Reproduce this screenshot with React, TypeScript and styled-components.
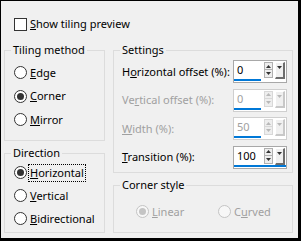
import React from "react";
import styled, { createGlobalStyle, css } from "styled-components";

const Global = createGlobalStyle`
  html, body { margin: 0; padding: 0; background: #000; }
  body {
    font-family: "Noto Sans", "Open Sans", sans-serif;
    font-size: 11px;
    color: #000;
  }
  * { box-sizing: border-box; }
`;

const Dialog = styled.div`
  width: 301px;
  height: 241px;
  border-style: solid;
  border-color: #000;
  border-width: 1px 3px 3px 1px;
  background: #f0f0f0;
  display: flex;
  flex-direction: column;
  padding: 15px 0 0 3px;
`;

const TopRow = styled.label`
  display: flex;
  align-items: center;
  gap: 3px;
  height: 16px;
  padding-left: 10px;
  line-height: 16px;
`;

const CheckBox = styled.span`
  width: 13px;
  height: 13px;
  border: 1px solid #333;
  background: #fff;
`;

const Columns = styled.div`
  display: flex;
  gap: 8px;
  margin-top: 10px;
`;

const Column = styled.div<{ $w: number }>`
  width: ${(p) => p.$w}px;
  display: flex;
  flex-direction: column;
  gap: 4px;
`;

const Group = styled.fieldset<{ $h: number }>`
  margin: 0;
  padding: 0;
  border: 1px solid #dcdcdc;
  height: ${(p) => p.$h}px;
  min-width: 0;
`;

const Legend = styled.legend`
  margin-left: 6px;
  padding: 0 2px;
  line-height: 16px;
  height: 16px;
`;

const RadioList = styled.div<{ $pt: number; $row: number }>`
  display: flex;
  flex-direction: column;
  padding: ${(p) => p.$pt}px 0 0 9px;
  & > * { height: ${(p) => p.$row}px; }
`;

const RadioRow = styled.div<{ $disabled?: boolean; $w?: number }>`
  display: flex;
  align-items: center;
  gap: 3px;
  line-height: 16px;
  color: ${(p) => (p.$disabled ? "#a0a0a0" : "#000")};
  ${(p) => p.$w && css`width: ${p.$w}px;`}
`;

const Circle = styled.span<{ $checked?: boolean; $disabled?: boolean }>`
  width: 13px;
  height: 13px;
  flex: none;
  border-radius: 50%;
  border: 1px solid ${(p) => (p.$disabled ? "#c4c4c4" : "#333")};
  background: ${(p) => (p.$disabled ? "#f7f7f7" : "#fff")};
  display: flex;
  align-items: center;
  justify-content: center;
  &::after {
    content: "";
    width: 7px;
    height: 7px;
    border-radius: 50%;
    background: ${(p) => (p.$disabled ? "#c4c4c4" : "#333")};
    display: ${(p) => (p.$checked ? "block" : "none")};
  }
`;

const Focus = styled.span`
  outline: 1px dotted #000;
  outline-offset: 0;
  padding: 0 1px;
  margin-left: -1px;
`;

const U = styled.span`
  text-decoration: underline;
  text-underline-offset: 1px;
`;

const Settings = styled.div`
  display: flex;
  flex-direction: column;
  gap: 5.5px;
  padding: 2px 5px 0 8px;
`;

const SetRow = styled.div<{ $disabled?: boolean }>`
  display: flex;
  align-items: center;
  height: 23px;
  color: ${(p) => (p.$disabled ? "#a0a0a0" : "#000")};
`;

const SetLabel = styled.span`
  flex: 1;
  line-height: 16px;
`;

const SpinBox = styled.div<{ $disabled?: boolean }>`
  width: 54px;
  height: 23px;
  border: 1px solid ${(p) => (p.$disabled ? "#cfcfcf" : "#a8a8a8")};
  background: #fff;
  display: flex;
  align-items: flex-start;
`;

const SpinInner = styled.div<{ $wide?: boolean }>`
  display: flex;
  align-items: flex-start;
  width: 52px;
  height: 20px;
  ${(p) => p.$wide && css`border-bottom: 2px solid #0078d7;`}
`;

const SpinText = styled.div<{ $wide?: boolean; $disabled?: boolean }>`
  width: 27px;
  height: ${(p) => (p.$wide ? 18 : 20)}px;
  padding-left: 3px;
  line-height: 18px;
  color: ${(p) => (p.$disabled ? "#a0a0a0" : "#000")};
  ${(p) => !p.$wide && css`border-bottom: 2px solid #0078d7;`}
`;

const SpinButtons = styled.div`
  margin: 1px 0 0 3px;
  width: 9px;
  display: flex;
  flex-direction: column;
`;

const SpinBtn = styled.div<{ $disabled?: boolean }>`
  height: 8px;
  border: 1px solid ${(p) => (p.$disabled ? "#d8d8d8" : "#b0b0b0")};
  background: #eeeeee;
  display: flex;
  align-items: center;
  justify-content: center;
  & + & { border-top: none; }
`;

const DropBtn = styled.div<{ $disabled?: boolean }>`
  margin: 1px 0 0 2px;
  width: 10px;
  height: 17px;
  background: #f0f0f0;
  border-style: solid;
  border-width: 1px 2px 2px 1px;
  border-color: ${(p) =>
    p.$disabled ? "#fff #c8c8c8 #c8c8c8 #fff" : "#fff #6d6d6d #6d6d6d #fff"};
  display: flex;
  justify-content: center;
  padding-top: 3px;
`;

const Arrow = ({ up, color }: { up?: boolean; color: string }) => (
  <svg width="5" height="3" viewBox="0 0 5 3" style={{ display: "block" }}>
    <polygon points={up ? "0,3 5,3 2.5,0" : "0,0 5,0 2.5,3"} fill={color} />
  </svg>
);

const Spin = ({
  value,
  disabled,
  wide,
}: {
  value: string;
  disabled?: boolean;
  wide?: boolean;
}) => {
  const c = disabled ? "#b8b8b8" : "#333";
  return (
    <SpinBox $disabled={disabled}>
      <SpinInner $wide={wide}>
        <SpinText $wide={wide} $disabled={disabled}>
          {value}
        </SpinText>
        <SpinButtons>
          <SpinBtn $disabled={disabled}>
            <Arrow up color={c} />
          </SpinBtn>
          <SpinBtn $disabled={disabled}>
            <Arrow color={c} />
          </SpinBtn>
        </SpinButtons>
        <DropBtn $disabled={disabled}>
          <Arrow color={c} />
        </DropBtn>
      </SpinInner>
    </SpinBox>
  );
};

const CornerRow = styled.div`
  display: flex;
  padding: 7px 0 0 22px;
  height: 30px;
  & > * { height: 23px; }
`;

export default function App() {
  return (
    <>
      <Global />
      <Dialog>
        <TopRow>
          <CheckBox />
          <span>
            <U>S</U>how tiling preview
          </span>
        </TopRow>
        <Columns>
          <Column $w={101}>
            <Group $h={99}>
              <Legend>Tiling method</Legend>
              <RadioList $pt={3} $row={23.5}>
                <RadioRow>
                  <Circle />
                  <span>
                    <U>E</U>dge
                  </span>
                </RadioRow>
                <RadioRow>
                  <Circle $checked />
                  <span>
                    <U>C</U>orner
                  </span>
                </RadioRow>
                <RadioRow>
                  <Circle />
                  <span>
                    <U>M</U>irror
                  </span>
                </RadioRow>
              </RadioList>
            </Group>
            <Group $h={88}>
              <Legend>Direction</Legend>
              <RadioList $pt={0} $row={23}>
                <RadioRow>
                  <Circle $checked />
                  <Focus>
                    <U>H</U>orizontal
                  </Focus>
                </RadioRow>
                <RadioRow>
                  <Circle />
                  <span>
                    <U>V</U>ertical
                  </span>
                </RadioRow>
                <RadioRow>
                  <Circle />
                  <span>
                    <U>B</U>idirectional
                  </span>
                </RadioRow>
              </RadioList>
            </Group>
          </Column>
          <Column $w={180}>
            <Group $h={131}>
              <Legend>Settings</Legend>
              <Settings>
                <SetRow>
                  <SetLabel>
                    H<U>o</U>rizontal offset (%):
                  </SetLabel>
                  <Spin value="0" />
                </SetRow>
                <SetRow $disabled>
                  <SetLabel>
                    Ve<U>r</U>tical offset (%):
                  </SetLabel>
                  <Spin value="0" disabled />
                </SetRow>
                <SetRow $disabled>
                  <SetLabel>
                    <U>W</U>idth (%):
                  </SetLabel>
                  <Spin value="50" disabled />
                </SetRow>
                <SetRow>
                  <SetLabel>
                    <U>T</U>ransition (%):
                  </SetLabel>
                  <Spin value="100" wide />
                </SetRow>
              </Settings>
            </Group>
            <Group $h={56}>
              <Legend>Corner style</Legend>
              <CornerRow>
                <RadioRow $disabled $w={82}>
                  <Circle $checked $disabled />
                  <span>
                    <U>L</U>inear
                  </span>
                </RadioRow>
                <RadioRow $disabled>
                  <Circle $disabled />
                  <span>
                    C<U>u</U>rved
                  </span>
                </RadioRow>
              </CornerRow>
            </Group>
          </Column>
        </Columns>
      </Dialog>
    </>
  );
}
